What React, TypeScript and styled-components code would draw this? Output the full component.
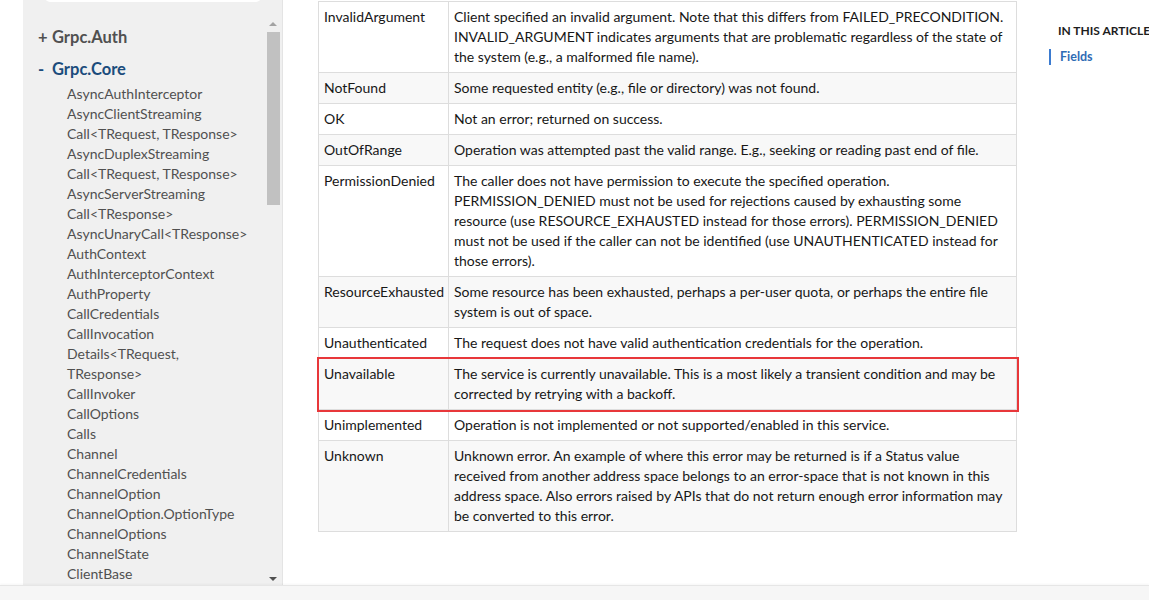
import styled, { createGlobalStyle } from 'styled-components';

const GlobalStyle = createGlobalStyle`
    html, body {
        margin: 0;
        padding: 0;
        background: #ffffff;
    }
    body {
        font-family: "Lato", "Noto Sans", sans-serif;
        color: #171717;
        overflow: hidden;
    }
`;

const Page = styled.div`
    display: flex;
    flex-direction: column;
    width: 1149px;
    height: 600px;
    overflow: hidden;
`;

const Main = styled.div`
    flex: 1;
    min-height: 0;
    display: flex;
    padding-left: 23px;
`;

const Sidebar = styled.nav`
    width: 259px;
    flex-shrink: 0;
    background: #f0f0f0;
    border-right: 1px solid #e4e4e4;
    display: flex;
    flex-direction: column;
    overflow: hidden;
`;

const SearchBox = styled.div`
    margin: -34px 21px 0 22px;
    height: 36px;
    background: #ffffff;
    border-radius: 5px;
`;

const ScrollArea = styled.div`
    flex: 1;
    min-height: 0;
    margin-top: 15px;
    display: flex;
`;

const NavList = styled.div`
    flex: 1;
    min-width: 0;
    padding: 4px 0 0 15px;
    overflow: hidden;
`;

const Namespace = styled.div<{ open?: boolean }>`
    display: flex;
    font-size: 16.5px;
    font-weight: 700;
    line-height: 32px;
    color: ${props => props.open ? "#1b4c7c" : "#505050"};
`;

const Sign = styled.span`
    width: 14px;
    flex-shrink: 0;
`;

const Items = styled.ul`
    list-style: none;
    margin: -1px 0 0 29px;
    padding: 0;
`;

const Item = styled.li`
    font-size: 14px;
    line-height: 20px;
    color: #505050;
    white-space: nowrap;
`;

const Track = styled.div`
    width: 14px;
    margin-right: 2px;
    display: flex;
    flex-direction: column;
    align-items: center;
`;

const Arrow = styled.div<{ down?: boolean }>`
    width: 0;
    height: 0;
    border-left: 4px solid transparent;
    border-right: 4px solid transparent;
    ${props => props.down
        ? "border-top: 4px solid #505050; margin-top: auto; margin-bottom: 4px;"
        : "border-bottom: 4px solid #a3a3a3; margin-top: 5px;"}
`;

const Thumb = styled.div`
    width: 13px;
    height: 173px;
    margin-top: 6px;
    background: #c1c1c1;
`;

const Content = styled.main`
    width: 699px;
    margin-left: 35px;
    padding-top: 1px;
    flex-shrink: 0;
`;

const Table = styled.table`
    width: 699px;
    table-layout: fixed;
    border-collapse: collapse;
    font-size: 14px;
    line-height: 20px;
    color: #171717;
`;

const Row = styled.tr<{ highlight?: boolean }>`
    &:nth-child(even) {
        background: #f8f8f8;
    }
    ${props => props.highlight ? "outline: 2px solid #e8373a; outline-offset: 0px;" : ""}
`;

const Cell = styled.td`
    border: 1px solid #dddddd;
    padding: 5px;
    vertical-align: top;
    white-space: nowrap;
`;

const Aside = styled.aside`
    margin-left: 32px;
    padding-top: 23px;
    flex: 1;
    min-width: 0;
    white-space: nowrap;
    overflow: hidden;
`;

const AsideTitle = styled.div`
    padding-left: 9px;
    font-size: 12px;
    font-weight: 700;
    line-height: 16px;
    color: #1e1e1e;
`;

const AsideLink = styled.div`
    margin-top: 10px;
    border-left: 2px solid #3b7bd0;
    padding-left: 9px;
    font-size: 12.5px;
    font-weight: 700;
    line-height: 16px;
    color: #2f6cb5;
`;

const Footer = styled.footer`
    height: 14px;
    flex-shrink: 0;
    background: #f6f6f6;
    border-top: 1px solid #e6e6e6;
    box-shadow: 0 -1px 2px rgba(0, 0, 0, 0.04);
`;

const navItems: string[][] = [
    ["AsyncAuthInterceptor"],
    ["AsyncClientStreaming"],
    ["Call<TRequest, TResponse>"],
    ["AsyncDuplexStreaming"],
    ["Call<TRequest, TResponse>"],
    ["AsyncServerStreaming"],
    ["Call<TResponse>"],
    ["AsyncUnaryCall<TResponse>"],
    ["AuthContext"],
    ["AuthInterceptorContext"],
    ["AuthProperty"],
    ["CallCredentials"],
    ["CallInvocation"],
    ["Details<TRequest,", "TResponse>"],
    ["CallInvoker"],
    ["CallOptions"],
    ["Calls"],
    ["Channel"],
    ["ChannelCredentials"],
    ["ChannelOption"],
    ["ChannelOption.OptionType"],
    ["ChannelOptions"],
    ["ChannelState"],
    ["ClientBase"],
];

type StatusRow = {
    name: string;
    lines: string[];
    highlight?: boolean;
};

const rows: StatusRow[] = [
    {
        name: "InvalidArgument",
        lines: [
            "Client specified an invalid argument. Note that this differs from FAILED_PRECONDITION.",
            "INVALID_ARGUMENT indicates arguments that are problematic regardless of the state of",
            "the system (e.g., a malformed file name).",
        ],
    },
    { name: "NotFound", lines: ["Some requested entity (e.g., file or directory) was not found."] },
    { name: "OK", lines: ["Not an error; returned on success."] },
    { name: "OutOfRange", lines: ["Operation was attempted past the valid range. E.g., seeking or reading past end of file."] },
    {
        name: "PermissionDenied",
        lines: [
            "The caller does not have permission to execute the specified operation.",
            "PERMISSION_DENIED must not be used for rejections caused by exhausting some",
            "resource (use RESOURCE_EXHAUSTED instead for those errors). PERMISSION_DENIED",
            "must not be used if the caller can not be identified (use UNAUTHENTICATED instead for",
            "those errors).",
        ],
    },
    {
        name: "ResourceExhausted",
        lines: [
            "Some resource has been exhausted, perhaps a per-user quota, or perhaps the entire file",
            "system is out of space.",
        ],
    },
    { name: "Unauthenticated", lines: ["The request does not have valid authentication credentials for the operation."] },
    {
        name: "Unavailable",
        highlight: true,
        lines: [
            "The service is currently unavailable. This is a most likely a transient condition and may be",
            "corrected by retrying with a backoff.",
        ],
    },
    { name: "Unimplemented", lines: ["Operation is not implemented or not supported/enabled in this service."] },
    {
        name: "Unknown",
        lines: [
            "Unknown error. An example of where this error may be returned is if a Status value",
            "received from another address space belongs to an error-space that is not known in this",
            "address space. Also errors raised by APIs that do not return enough error information may",
            "be converted to this error.",
        ],
    },
];

const App = () => {
    return (
        <Page>
            <GlobalStyle />
            <Main>
                <Sidebar>
                    <SearchBox />
                    <ScrollArea>
                        <NavList>
                            <Namespace><Sign>+</Sign>Grpc.Auth</Namespace>
                            <Namespace open><Sign>-</Sign>Grpc.Core</Namespace>
                            <Items>
                                {navItems.map((item, i) => (
                                    <Item key={i}>
                                        {item.map((part, j) => (
                                            <span key={j}>{j > 0 && <br />}{part}</span>
                                        ))}
                                    </Item>
                                ))}
                            </Items>
                        </NavList>
                        <Track>
                            <Arrow />
                            <Thumb />
                            <Arrow down />
                        </Track>
                    </ScrollArea>
                </Sidebar>
                <Content>
                    <Table>
                        <colgroup>
                            <col style={{ width: 130 }} />
                            <col />
                        </colgroup>
                        <tbody>
                            {rows.map(row => (
                                <Row key={row.name} highlight={row.highlight}>
                                    <Cell>{row.name}</Cell>
                                    <Cell>
                                        {row.lines.map((line, i) => (
                                            <span key={i}>{i > 0 && <br />}{line}</span>
                                        ))}
                                    </Cell>
                                </Row>
                            ))}
                        </tbody>
                    </Table>
                </Content>
                <Aside>
                    <AsideTitle>IN THIS ARTICLE</AsideTitle>
                    <AsideLink>Fields</AsideLink>
                </Aside>
            </Main>
            <Footer />
        </Page>
    );
};

export default App;
